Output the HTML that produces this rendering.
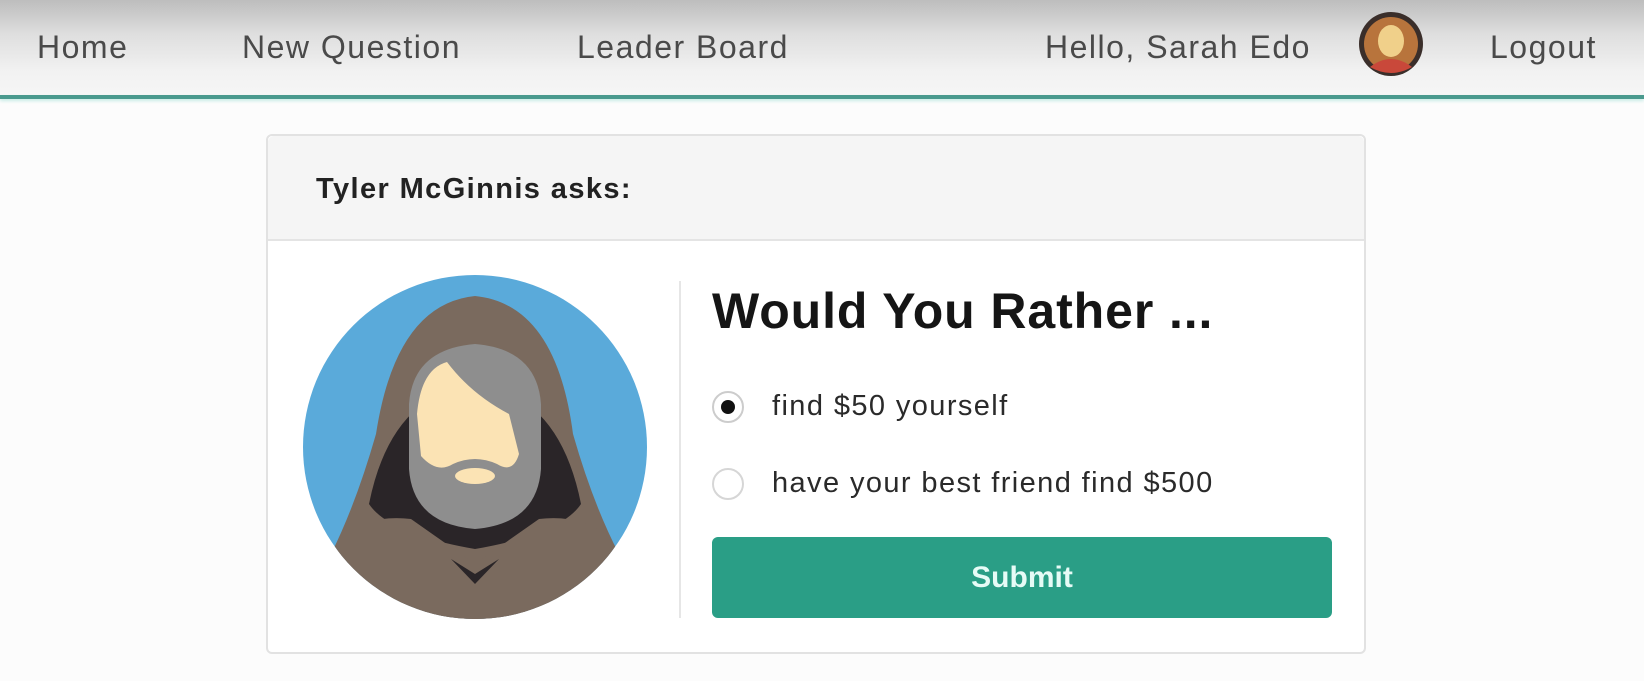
<!DOCTYPE html>
<html><head><meta charset="utf-8"><style>
*{margin:0;padding:0;box-sizing:border-box}
body{width:1644px;height:681px;background:#fcfcfc;font-family:"Liberation Sans",sans-serif;position:relative;overflow:hidden}
.nav{position:absolute;left:0;top:0;width:1644px;height:96px;background:linear-gradient(#bdbdbd 0%,#dedede 35%,#f2f2f2 75%,#f6f6f6 100%)}
.line{position:absolute;left:0;top:95px;width:1644px;height:4px;background:#4a9a8e;box-shadow:0 2px 3px #c8ece6}
.n{position:absolute;top:29px;font-size:32px;color:#4a4a4a;letter-spacing:1.5px}
.card{position:absolute;left:266px;top:134px;width:1100px;height:520px;border:2px solid #e2e2e2;border-radius:6px;background:#fff}
.ch{height:105px;background:#f5f5f5;border-bottom:2px solid #e4e4e4;border-radius:6px 6px 0 0}
.title{position:absolute;left:48px;top:37px;font-size:29px;font-weight:bold;color:#222;letter-spacing:1.4px}
.div{position:absolute;left:679px;top:281px;width:2px;height:337px;background:#e6e6e6}
.h{position:absolute;left:712px;top:282px;font-size:50px;font-weight:bold;color:#151515;letter-spacing:0.9px}
.r{position:absolute;width:32px;height:32px;border-radius:50%;border:2px solid #d6d6d6;background:#fff}
.opt{position:absolute;left:772px;font-size:29px;color:#2a2a2a;letter-spacing:1.4px}
.btn{position:absolute;left:712px;top:537px;width:620px;height:81px;background:#2a9e86;border-radius:6px;color:#e6fbf6;font-size:30px;font-weight:bold;text-align:center;line-height:81px}
</style></head><body>
<div class="nav"></div><div class="line"></div>
<div class="n" style="left:37px">Home</div>
<div class="n" style="left:242px">New Question</div>
<div class="n" style="left:577px">Leader Board</div>
<div class="n" style="left:1045px">Hello, Sarah Edo</div>
<svg style="position:absolute;left:1358px;top:11px" width="66" height="66" viewBox="0 0 66 66">
<circle cx="33" cy="33" r="32" fill="#3a2e2a"/><circle cx="33" cy="33" r="27" fill="#b8743c"/>
<ellipse cx="33" cy="30" rx="13" ry="16" fill="#f0d08a"/><path d="M12 56 Q33 40 54 56 Q33 68 12 56Z" fill="#c9483a"/></svg>
<div class="n" style="left:1490px">Logout</div>
<div class="card"><div class="ch"></div><div class="title">Tyler McGinnis asks:</div></div>
<svg style="position:absolute;left:301px;top:274px" width="348" height="346" viewBox="0 0 348 346">
<defs><clipPath id="c"><circle cx="174" cy="173" r="172"/></clipPath></defs>
<circle cx="174" cy="173" r="172" fill="#5aaada"/>
<g clip-path="url(#c)">
<path d="M30 360 L30 280 Q55 230 75 160 Q95 30 174 22 Q255 30 272 160 Q292 230 318 280 L318 360Z" fill="#7a6a5e"/>
<path d="M68 230 Q90 120 174 110 Q258 120 280 230 Q260 260 174 275 Q88 260 68 230Z" fill="#2a2528"/>
<path d="M40 262 Q70 240 110 245 L174 290 L238 245 Q278 240 308 262 L330 360 L18 360Z" fill="#7a6a5e"/>
<path d="M150 285 L174 310 L198 285 L174 300Z" fill="#2a2528"/>
<path d="M108 130 Q112 75 174 70 Q236 75 240 130 L240 195 Q236 250 174 255 Q112 250 108 195Z" fill="#8e8e8e"/>
<path d="M116 140 Q120 95 146 88 Q170 120 208 140 L218 180 Q212 200 196 190 Q174 180 152 190 Q136 200 120 182Z" fill="#fbe3b4"/>
<ellipse cx="174" cy="202" rx="20" ry="8" fill="#fbe3b4"/>
</g></svg>
<div class="div"></div>
<div class="h">Would You Rather ...</div>
<div class="r" style="left:712px;top:391px;border-color:#ccc"><div style="position:absolute;left:7px;top:7px;width:14px;height:14px;border-radius:50%;background:#111"></div></div>
<div class="opt" style="top:390px">find $50 yourself</div>
<div class="r" style="left:712px;top:468px"></div>
<div class="opt" style="top:467px">have your best friend find $500</div>
<div class="btn">Submit</div>
</body></html>
